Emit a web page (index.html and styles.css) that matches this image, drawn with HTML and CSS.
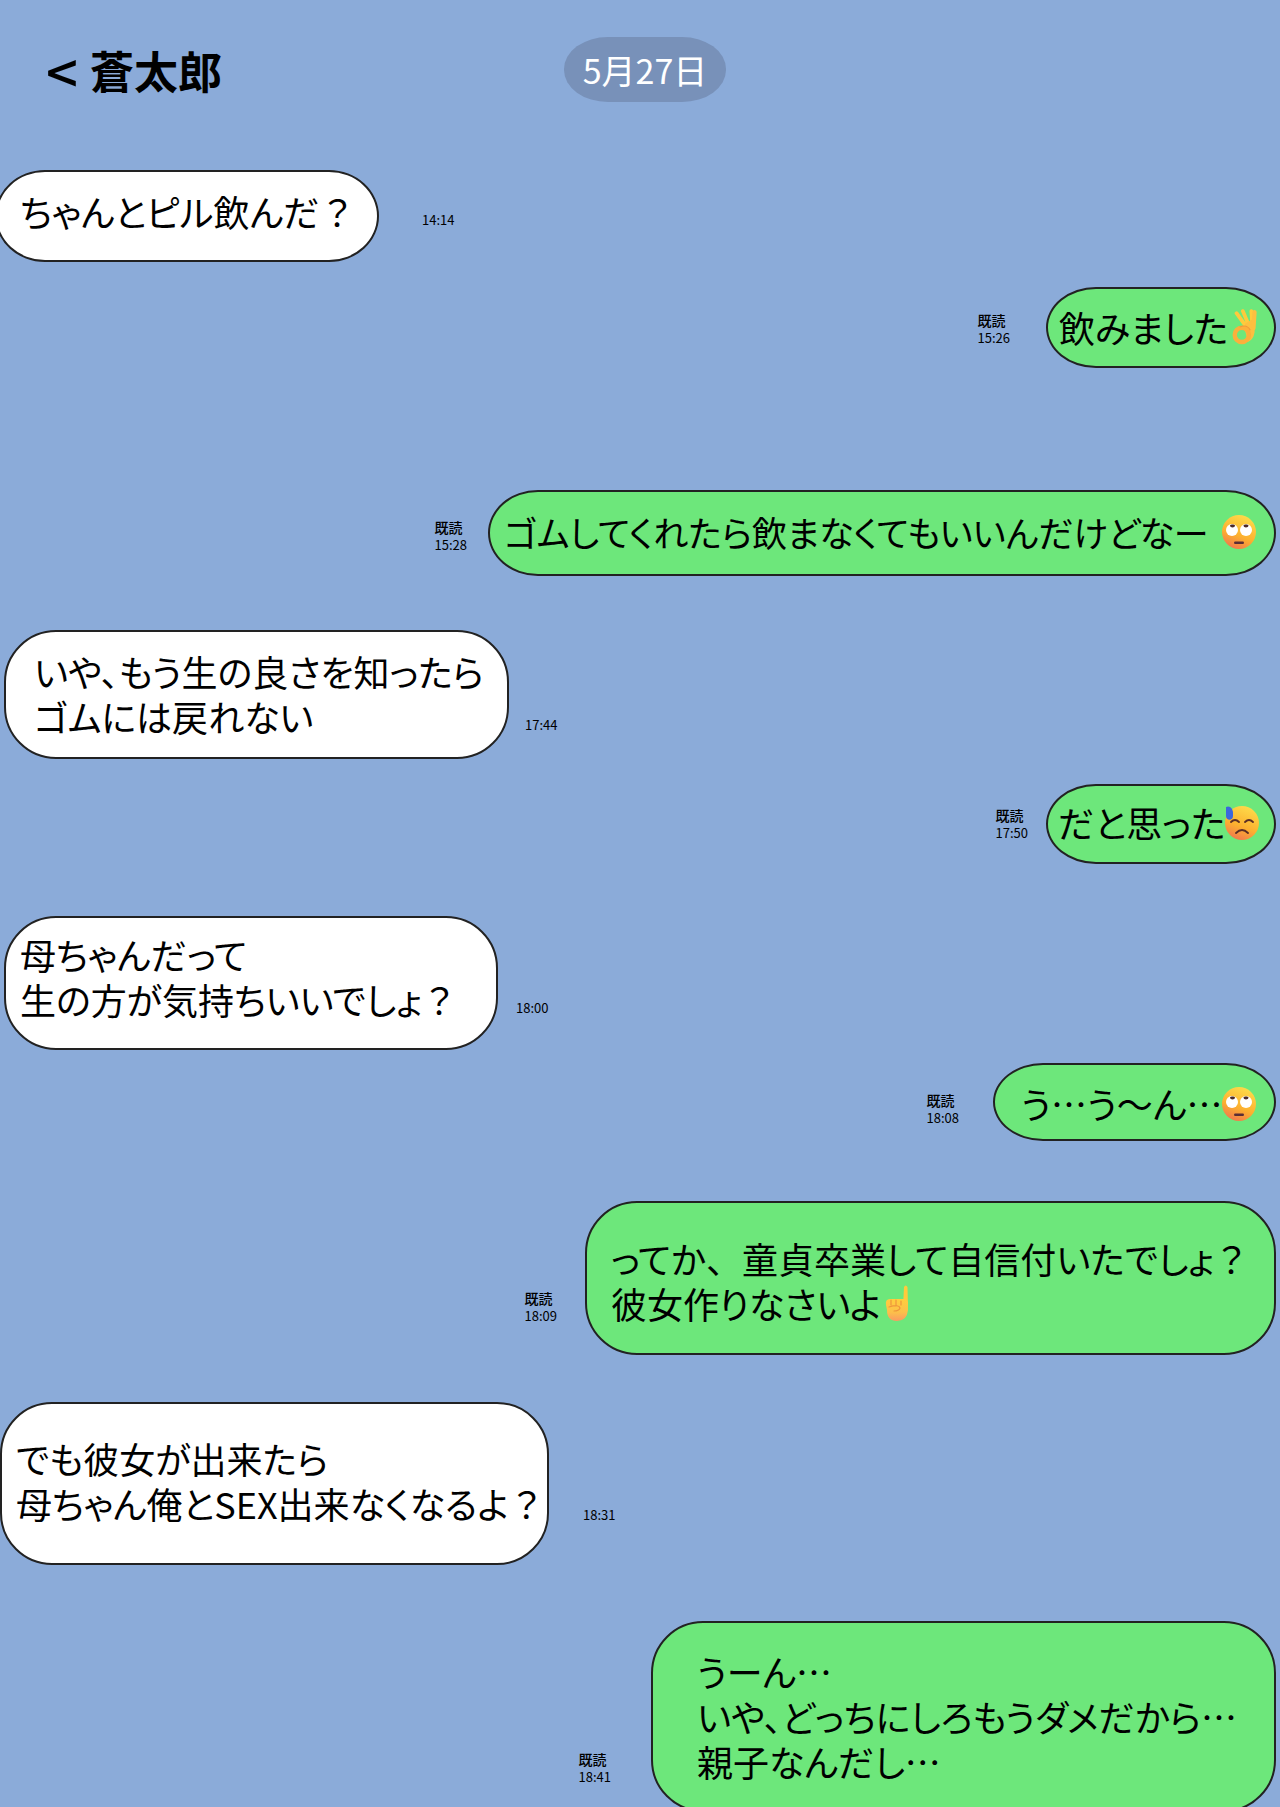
FILE: index.html
```html
<!doctype html>
<html lang="ja">
    <head>
        <meta charset="UTF-8" />
        <meta name="viewport" content="width=device-width, initial-scale=1.0" />
        <title>蒼太郎</title>
        <link rel="stylesheet" href="styles.css">
    </head>
    <body>
        <!-- Shared emoji shapes -->
        <svg class="defs" aria-hidden="true">
            <defs>
                <linearGradient id="face" x1="0.7" y1="0" x2="0.3" y2="1">
                    <stop offset="0" stop-color="#fddc4b" />
                    <stop offset="0.6" stop-color="#fcb02f" />
                    <stop offset="1" stop-color="#f0764f" />
                </linearGradient>
                <linearGradient id="skin" x1="0.5" y1="0" x2="0.5" y2="1">
                    <stop offset="0" stop-color="#ffce3d" />
                    <stop offset="0.6" stop-color="#fcc04a" />
                    <stop offset="1" stop-color="#fa9a62" />
                </linearGradient>
                <symbol id="rolling-eyes" viewBox="0 0 34 34">
                    <circle cx="17" cy="17" r="17" fill="url(#face)" />
                    <circle cx="10" cy="15" r="6" fill="#fff" />
                    <circle cx="24" cy="15" r="6" fill="#fff" />
                    <path d="M8 10.200c1-1 4-1 5 0c0 3-5 3-5 0zM21.500 10.200c1-1 4-1 5 0c0 3-5 3-5 0z" fill="#4a2a2a" />
                    <rect x="12" y="26.500" width="10" height="2.500" rx="1.200" fill="#5b2d35" />
                </symbol>
                <symbol id="cold-sweat" viewBox="0 0 34 34">
                    <circle cx="17" cy="17" r="17" fill="url(#face)" />
                    <path d="M1 1c4-2 7 2 7 6v3c0 5-7 5-7 0z" fill="#3b67dc" />
                    <path d="M6 16q4-4 8 0M20 16q4-4 8 0M11 27q6-6 12 0" fill="none" stroke="#5b2d25" stroke-width="1.800" stroke-linecap="round" />
                </symbol>
                <symbol id="ok-hand" viewBox="0 0 24 34">
                    <path d="M12 15L4 4M15 14L10 2M19 16L18 2" fill="none" stroke="#ffca3c" stroke-width="3.600" stroke-linecap="round" />
                    <path d="M12 14L22 8L21 22Q20 29 15 31L12 20z" fill="#fcbf40" />
                    <path d="M21 3L20 18" stroke="#fcbf40" stroke-width="4" stroke-linecap="round" />
                    <circle cx="9" cy="24.500" r="6.700" fill="none" stroke="#fbb03c" stroke-width="4.200" />
                    <path d="M7 17Q14 14 17 20" fill="none" stroke="#f1973a" stroke-width="1" />
                </symbol>
                <symbol id="point-up" viewBox="0 0 26 36">
                    <path d="M18 22L19 2Q20.500-1 22.500 2L23 22z" fill="#ffca3c" />
                    <path d="M1 20Q0 14 5 14H20L23 17V25Q22 36 12 36Q2 36 2 25z" fill="url(#skin)" />
                    <path d="M6 15V20M11 15V21M16 16V20M4 22Q14 19 15 23Q14 26 9 26" fill="none" stroke="#ee963c" stroke-width="1.200" stroke-linecap="round" />
                </symbol>
            </defs>
        </svg>

        <div class="chat">
            <header class="header">
                <div class="title">
                    <button class="back" aria-label="戻る">&lt;</button>
                    <h1>蒼太郎</h1>
                </div>
                <time class="date" datetime="05-27">5月27日</time>
            </header>

            <main class="messages">
                <div class="message received short m1">
                    <p class="bubble">ちゃんとピル飲んだ<span class="full">？</span></p>
                    <div class="meta"><time>14:14</time></div>
                </div>

                <div class="message sent short m2">
                    <div class="meta"><span>既読</span><time>15:26</time></div>
                    <p class="bubble">飲みました<svg class="emoji hand" role="img" aria-label="OK"><use href="#ok-hand" /></svg></p>
                </div>

                <div class="message sent short m3">
                    <div class="meta"><span>既読</span><time>15:28</time></div>
                    <p class="bubble">ゴムしてくれたら飲まなくてもいいんだけどなー<svg class="emoji spaced" role="img" aria-label="あきれ顔"><use href="#rolling-eyes" /></svg></p>
                </div>

                <div class="message received m4">
                    <p class="bubble">いや、もう生の良さを知ったら<br>ゴムには戻れない</p>
                    <div class="meta"><time>17:44</time></div>
                </div>

                <div class="message sent short m5">
                    <div class="meta"><span>既読</span><time>17:50</time></div>
                    <p class="bubble">だと思った<svg class="emoji" role="img" aria-label="冷や汗"><use href="#cold-sweat" /></svg></p>
                </div>

                <div class="message received m6">
                    <p class="bubble">母ちゃんだって<br>生の方が気持ちいいでしょ<span class="full">？</span></p>
                    <div class="meta"><time>18:00</time></div>
                </div>

                <div class="message sent short m7">
                    <div class="meta"><span>既読</span><time>18:08</time></div>
                    <p class="bubble">う…う～ん…<svg class="emoji" role="img" aria-label="あきれ顔"><use href="#rolling-eyes" /></svg></p>
                </div>

                <div class="message sent m8">
                    <div class="meta"><span>既読</span><time>18:09</time></div>
                    <p class="bubble">ってか<span class="full">、</span>童貞卒業して自信付いたでしょ<span class="full">？</span><br>彼女作りなさいよ<svg class="emoji hand" role="img" aria-label="人差し指"><use href="#point-up" /></svg></p>
                </div>

                <div class="message received m9">
                    <p class="bubble">でも彼女が出来たら<br>母ちゃん俺とSEX出来なくなるよ<span class="full">？</span></p>
                    <div class="meta"><time>18:31</time></div>
                </div>

                <div class="message sent m10">
                    <div class="meta"><span>既読</span><time>18:41</time></div>
                    <p class="bubble">うーん…<br>いや、どっちにしろもうダメだから…<br>親子なんだし…</p>
                </div>
            </main>
        </div>
    </body>
</html>
```
FILE: styles.css
```css
* {
    box-sizing: border-box;
}

body {
    margin: 0;
    background: #8babd9;
    color: #000;
    font-family: "Noto Sans CJK JP", sans-serif;
}

.defs {
    position: absolute;
    width: 0;
    height: 0;
}

.chat {
    height: 100vh;
    overflow: hidden;
}

/* Header */
.header {
    display: grid;
    grid-template-columns: 1fr auto 1fr;
    align-items: center;
    padding: 37px 36px 0 46px;
}

.title {
    display: flex;
    align-items: center;
    gap: 12px;
}

.title h1 {
    margin: 0;
    font-size: 44px;
    line-height: 64px;
    font-weight: 700;
}

.back {
    padding: 0;
    border: none;
    background: none;
    color: #000;
    font-family: "Noto Sans CJK JP", sans-serif;
    font-size: 56px;
    font-weight: 500;
    line-height: 60px;
    cursor: pointer;
}

.date {
    padding: 0 19px;
    border-radius: 44px / 32px;
    background: #7891b9;
    color: #fff;
    font-size: 34px;
    line-height: 65px;
}

/* Messages */
.messages {
    padding: 68px 4px 0;
}

.message {
    display: flex;
    align-items: flex-end;
}

.sent {
    justify-content: flex-end;
}

.bubble {
    flex: none;
    margin: 0;
    border: 2px solid #222;
    border-radius: 52px;
    background: #fff;
    font-size: 36px;
    line-height: 45px;
    font-feature-settings: "palt";
    white-space: nowrap;
}

.short .bubble {
    border-radius: 50px / 50%;
}

.sent .bubble {
    background: #6de77b;
}

/* Punctuation that keeps its full width */
.full {
    font-feature-settings: normal;
}

.meta {
    display: flex;
    flex-direction: column;
    font-size: 13px;
    line-height: 18px;
}

.meta span {
    font-size: 14px;
    font-weight: 500;
}

.emoji {
    width: 34px;
    height: 34px;
    vertical-align: -2px;
}

.emoji.hand {
    width: 26px;
    height: 36px;
    margin-left: 4px;
}

.emoji.spaced {
    margin-left: 14px;
}

.m1 { gap: 43px; margin-left: -9px; }
.m1 .bubble { width: 384px; padding: 17px 0 26px 23px; }
.m1 .meta { padding-bottom: 33px; }

.m2 { gap: 36px; margin-top: 25px; }
.m2 .bubble { width: 230px; padding: 16px 0 16px 11px; }
.m2 .meta { padding-bottom: 21px; }

.m3 { gap: 21px; margin-top: 122px; }
.m3 .bubble { width: 788px; padding: 17px 0 20px 14px; font-size: 35px; }
.m3 .meta { padding-bottom: 22px; }

.m4 { gap: 16px; margin-top: 54px; }
.m4 .bubble { width: 505px; padding: 17px 0 18px 28px; }
.m4 .meta { padding-bottom: 25px; }

.m5 { gap: 18px; margin-top: 25px; }
.m5 .bubble { width: 230px; padding: 14px 0 17px 10px; }
.m5 .meta { padding-bottom: 22px; }

.m6 { gap: 18px; margin-top: 52px; }
.m6 .bubble { width: 494px; padding: 14px 0 26px 14px; }
.m6 .meta { padding-bottom: 33px; }

.m7 { gap: 34px; margin-top: 13px; }
.m7 .bubble { width: 283px; padding: 16px 0 13px 26px; }
.m7 .meta { padding-bottom: 14px; }

.m8 { gap: 28px; margin-top: 60px; }
.m8 .bubble { width: 691px; padding: 33px 0 27px 24px; }
.m8 .meta { padding-bottom: 30px; }

.m9 { gap: 34px; margin-top: 47px; margin-left: -4px; }
.m9 .bubble { width: 549px; padding: 32px 0 37px 14px; }
.m9 .meta { padding-bottom: 41px; }

.m10 { gap: 40px; margin-top: 56px; }
.m10 .bubble { width: 625px; padding: 26px 0 26px 44px; }
.m10 .meta { padding-bottom: 26px; }
```
